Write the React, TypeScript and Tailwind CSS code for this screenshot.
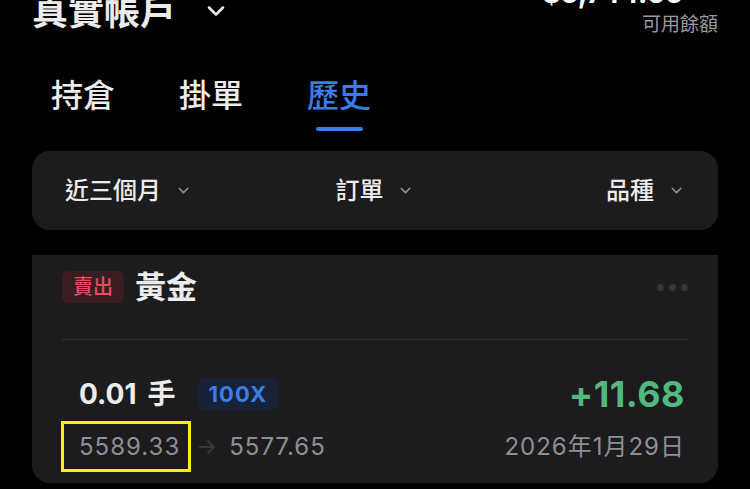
import { ChevronDown } from "lucide-react";

const font = { fontFamily: '"Inter", "Noto Sans CJK TC", sans-serif' };

function FilterItem({ label }: { label: string }) {
  return (
    <div className="flex items-center gap-[14px]">
      <span className="text-[24px] leading-[24px] font-medium text-[#ececec]">{label}</span>
      <ChevronDown size={17} strokeWidth={2} className="text-[#8e8e93]" />
    </div>
  );
}

export default function App() {
  return (
    <div className="h-[489px] w-[750px] overflow-hidden bg-black px-[32px]" style={font}>
      {/* header */}
      <div className="-mt-[6px] flex h-[61px] items-start justify-between">
        <div className="flex items-center gap-[26px]">
          <span className="text-[36px] leading-[36px] font-bold text-[#ececec]">真實帳戶</span>
          <ChevronDown size={28} strokeWidth={2.2} className="-mt-[2px] text-[#ececec]" />
        </div>
        <div className="flex flex-col items-end">
          <span className="-mt-[15px] mr-[35px] text-[28px] leading-[28px] font-bold text-white">$5,744.66</span>
          <span className="mt-[6px] text-[19px] leading-[24px] text-[#9a9a9e]">可用餘額</span>
        </div>
      </div>

      {/* tabs */}
      <div className="mt-[25px] flex gap-[64px] pl-[19px]">
        <span className="text-[32px] leading-[32px] font-medium text-[#ececec]">持倉</span>
        <span className="text-[32px] leading-[32px] font-medium text-[#ececec]">掛單</span>
        <div className="flex flex-col items-center">
          <span className="text-[32px] leading-[32px] font-medium text-[#3b7cec]">歷史</span>
          <div className="mt-[15px] h-[4px] w-[47px] rounded-full bg-[#3b7cec]" />
        </div>
      </div>

      {/* filters */}
      <div className="mt-[20px] grid h-[79px] grid-cols-3 items-center rounded-[18px] bg-[#1c1c1e] px-[33px]">
        <div className="justify-self-start">
          <FilterItem label="近三個月" />
        </div>
        <div className="justify-self-center">
          <FilterItem label="訂單" />
        </div>
        <div className="justify-self-end">
          <FilterItem label="品種" />
        </div>
      </div>

      {/* history card */}
      <div className="mt-[25px] h-[228px] rounded-b-[18px] bg-[#1c1c1e] px-[30px] pt-[16px]">
        <div className="flex items-center justify-between">
          <div className="flex items-center gap-[11px]">
            <span className="flex h-[32px] items-center rounded-[6px] bg-[#3a1d22] px-[11px] text-[20px] font-medium text-[#e04f5c]">
              賣出
            </span>
            <span className="text-[31px] leading-[32px] font-bold text-[#ececec]">黃金</span>
          </div>
          <div className="flex gap-[5px]">
            <span className="h-[7px] w-[7px] rounded-full bg-[#36363a]" />
            <span className="h-[7px] w-[7px] rounded-full bg-[#36363a]" />
            <span className="h-[7px] w-[7px] rounded-full bg-[#36363a]" />
          </div>
        </div>

        <div className="mt-[36px] h-px bg-[#323235]" />

        <div className="pl-[17px] pr-[3px] pt-[36px]">
          <div className="flex items-center justify-between">
            <div className="flex items-center gap-[22px]">
              <span className="flex items-center text-[28px] leading-[32px] font-bold text-[#ececec]">
                0.01
                <span className="ml-[11px] font-semibold">手</span>
              </span>
              <span className="flex h-[32px] items-center rounded-[6px] bg-[#172236] px-[11px] text-[22px] font-bold tracking-[1px] text-[#3b7cec]">
                100X
              </span>
            </div>
            <span className="text-[36px] leading-[36px] font-bold tracking-[0.5px] text-[#52b87c]">+11.68</span>
          </div>

          <div className="mt-[18px] flex items-center justify-between">
            <div className="flex items-center">
              <span className="relative text-[24px] leading-[28px] tracking-[1px] text-[#8e8e93]">
                5589.33
                <span className="absolute -left-[18px] -right-[11px] -top-[12px] -bottom-[11px] border-[3px] border-[#fff000]" />
              </span>
              <span className="ml-[16px] text-[22px] text-[#3a3a3d]">→</span>
              <span className="ml-[12px] text-[24px] leading-[28px] tracking-[1px] text-[#8e8e93]">5577.65</span>
            </div>
            <span className="text-[24px] leading-[28px] tracking-[1px] text-[#8e8e93]">2026年1月29日</span>
          </div>
        </div>
      </div>
    </div>
  );
}
